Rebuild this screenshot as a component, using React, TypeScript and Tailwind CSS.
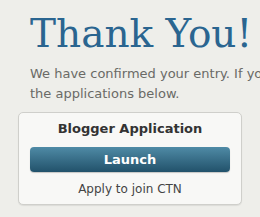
export default function App() {
  return (
    <div className="h-[217px] w-[260px] overflow-hidden bg-[#eeeeea] pl-[30px] pt-[10px]">
      <h1 className="whitespace-nowrap font-['DejaVu_Serif',serif] text-[39px] leading-[48px] text-[#2a6590]">
        Thank You!
      </h1>
      <p className="mt-[6px] whitespace-nowrap font-['DejaVu_Sans',sans-serif] text-[13px] leading-[20px] text-[#6a6a66]">
        We have confirmed your entry. If you would like to apply, choose one of
        <br />
        the applications below.
      </p>
      <div className="-ml-[12px] mt-[8px] flex h-[93px] w-[224px] flex-col items-center rounded-[5px] border border-[#cfcfcb] bg-[#f8f8f6] px-[11px] pt-[7px] shadow-[0_1px_1px_rgba(0,0,0,0.08)]">
        <div className="font-['DejaVu_Sans',sans-serif] text-[13px] font-bold leading-[18px] text-[#333]">
          Blogger Application
        </div>
        <button className="mt-[9px] h-[25px] w-full rounded-[4px] bg-gradient-to-b from-[#4f8ba6] to-[#22526b] font-['DejaVu_Sans',sans-serif] text-[13px] font-bold text-white shadow-[0_1px_1px_rgba(0,0,0,0.2)]">
          Launch
        </button>
        <div className="mt-[9px] font-['DejaVu_Sans',sans-serif] text-[12px] leading-[16px] text-[#444]">
          Apply to join CTN
        </div>
      </div>
    </div>
  );
}
